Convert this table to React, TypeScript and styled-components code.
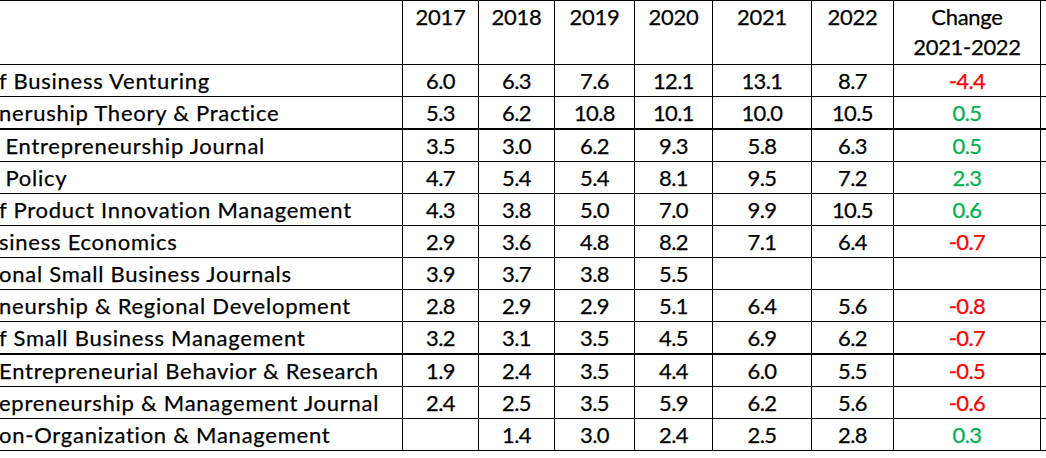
import React from "react";
import styled, { createGlobalStyle } from "styled-components";

type Row = {
    name: string;
    values: string[];
    change: string;
    thick?: boolean;
};

const years = ["2017", "2018", "2019", "2020", "2021", "2022"];

const rows: Row[] = [
    { name: "f Business Venturing", values: ["6.0", "6.3", "7.6", "12.1", "13.1", "8.7"], change: "-4.4" },
    { name: "neruship Theory & Practice", values: ["5.3", "6.2", "10.8", "10.1", "10.0", "10.5"], change: "0.5", thick: true },
    { name: " Entrepreneurship Journal", values: ["3.5", "3.0", "6.2", "9.3", "5.8", "6.3"], change: "0.5" },
    { name: " Policy", values: ["4.7", "5.4", "5.4", "8.1", "9.5", "7.2"], change: "2.3" },
    { name: "f Product Innovation Management", values: ["4.3", "3.8", "5.0", "7.0", "9.9", "10.5"], change: "0.6" },
    { name: "siness Economics", values: ["2.9", "3.6", "4.8", "8.2", "7.1", "6.4"], change: "-0.7" },
    { name: "onal Small Business Journals", values: ["3.9", "3.7", "3.8", "5.5", "", ""], change: "" },
    { name: "neurship & Regional Development", values: ["2.8", "2.9", "2.9", "5.1", "6.4", "5.6"], change: "-0.8" },
    { name: "f Small Business Management", values: ["3.2", "3.1", "3.5", "4.5", "6.9", "6.2"], change: "-0.7", thick: true },
    { name: "Entrepreneurial Behavior & Research", values: ["1.9", "2.4", "3.5", "4.4", "6.0", "5.5"], change: "-0.5" },
    { name: "epreneurship & Management Journal", values: ["2.4", "2.5", "3.5", "5.9", "6.2", "5.6"], change: "-0.6" },
    { name: "on-Organization & Management", values: ["", "1.4", "3.0", "2.4", "2.5", "2.8"], change: "0.3" },
];

const GlobalStyle = createGlobalStyle`
    html, body {
        margin: 0;
        padding: 0;
        background: #ffffff;
    }
    body {
        overflow: hidden;
        font-family: Lato, "Liberation Sans", sans-serif;
    }
`;

const Sheet = styled.div`
    width: 1046px;
    border-top: 1px solid #000;
    color: #000;
    font-family: Lato, "Liberation Sans", sans-serif;
    font-size: 22px;
    -webkit-text-stroke: 0.25px currentColor;
`;

const GridRow = styled.div<{ $thick?: boolean; $header?: boolean }>`
    display: grid;
    grid-template-columns: 403px 76px 76px 80px 78px 99px 82px 147px 1fr;
    box-sizing: border-box;
    height: ${({ $header, $thick }) => ($header ? 64 : $thick ? 33 : 32)}px;
    border-bottom: ${({ $thick }) => ($thick ? 2 : 1)}px solid #000;
`;

const Cell = styled.div`
    box-sizing: border-box;
    border-right: 1px solid #000;
    overflow: hidden;
    white-space: pre;
`;

const HeadCell = styled(Cell)`
    text-align: center;
    line-height: 30px;
    padding-top: 1px;
    letter-spacing: -0.3px;
`;

const NameCell = styled(Cell)`
    line-height: 31px;
    letter-spacing: 0.75px;
    text-indent: -1px;
`;

const NumCell = styled(Cell)<{ $tone?: "up" | "down" }>`
    text-align: center;
    line-height: 31px;
    letter-spacing: -0.6px;
    color: ${({ $tone }) => ($tone === "up" ? "#00b050" : $tone === "down" ? "#ff0000" : "#000")};
`;

const Spare = styled.div``;

export default function App() {
    return (
        <>
            <GlobalStyle />
            <Sheet>
                <GridRow $header>
                    <HeadCell />
                    {years.map(y => (
                        <HeadCell key={y}>{y}</HeadCell>
                    ))}
                    <HeadCell>
                        Change
                        <br />
                        2021-2022
                    </HeadCell>
                    <Spare />
                </GridRow>
                {rows.map(row => (
                    <GridRow key={row.name} $thick={row.thick}>
                        <NameCell>{row.name}</NameCell>
                        {row.values.map((v, i) => (
                            <NumCell key={i}>{v}</NumCell>
                        ))}
                        <NumCell $tone={row.change.startsWith("-") ? "down" : row.change ? "up" : undefined}>
                            {row.change}
                        </NumCell>
                        <Spare />
                    </GridRow>
                ))}
            </Sheet>
        </>
    );
}
